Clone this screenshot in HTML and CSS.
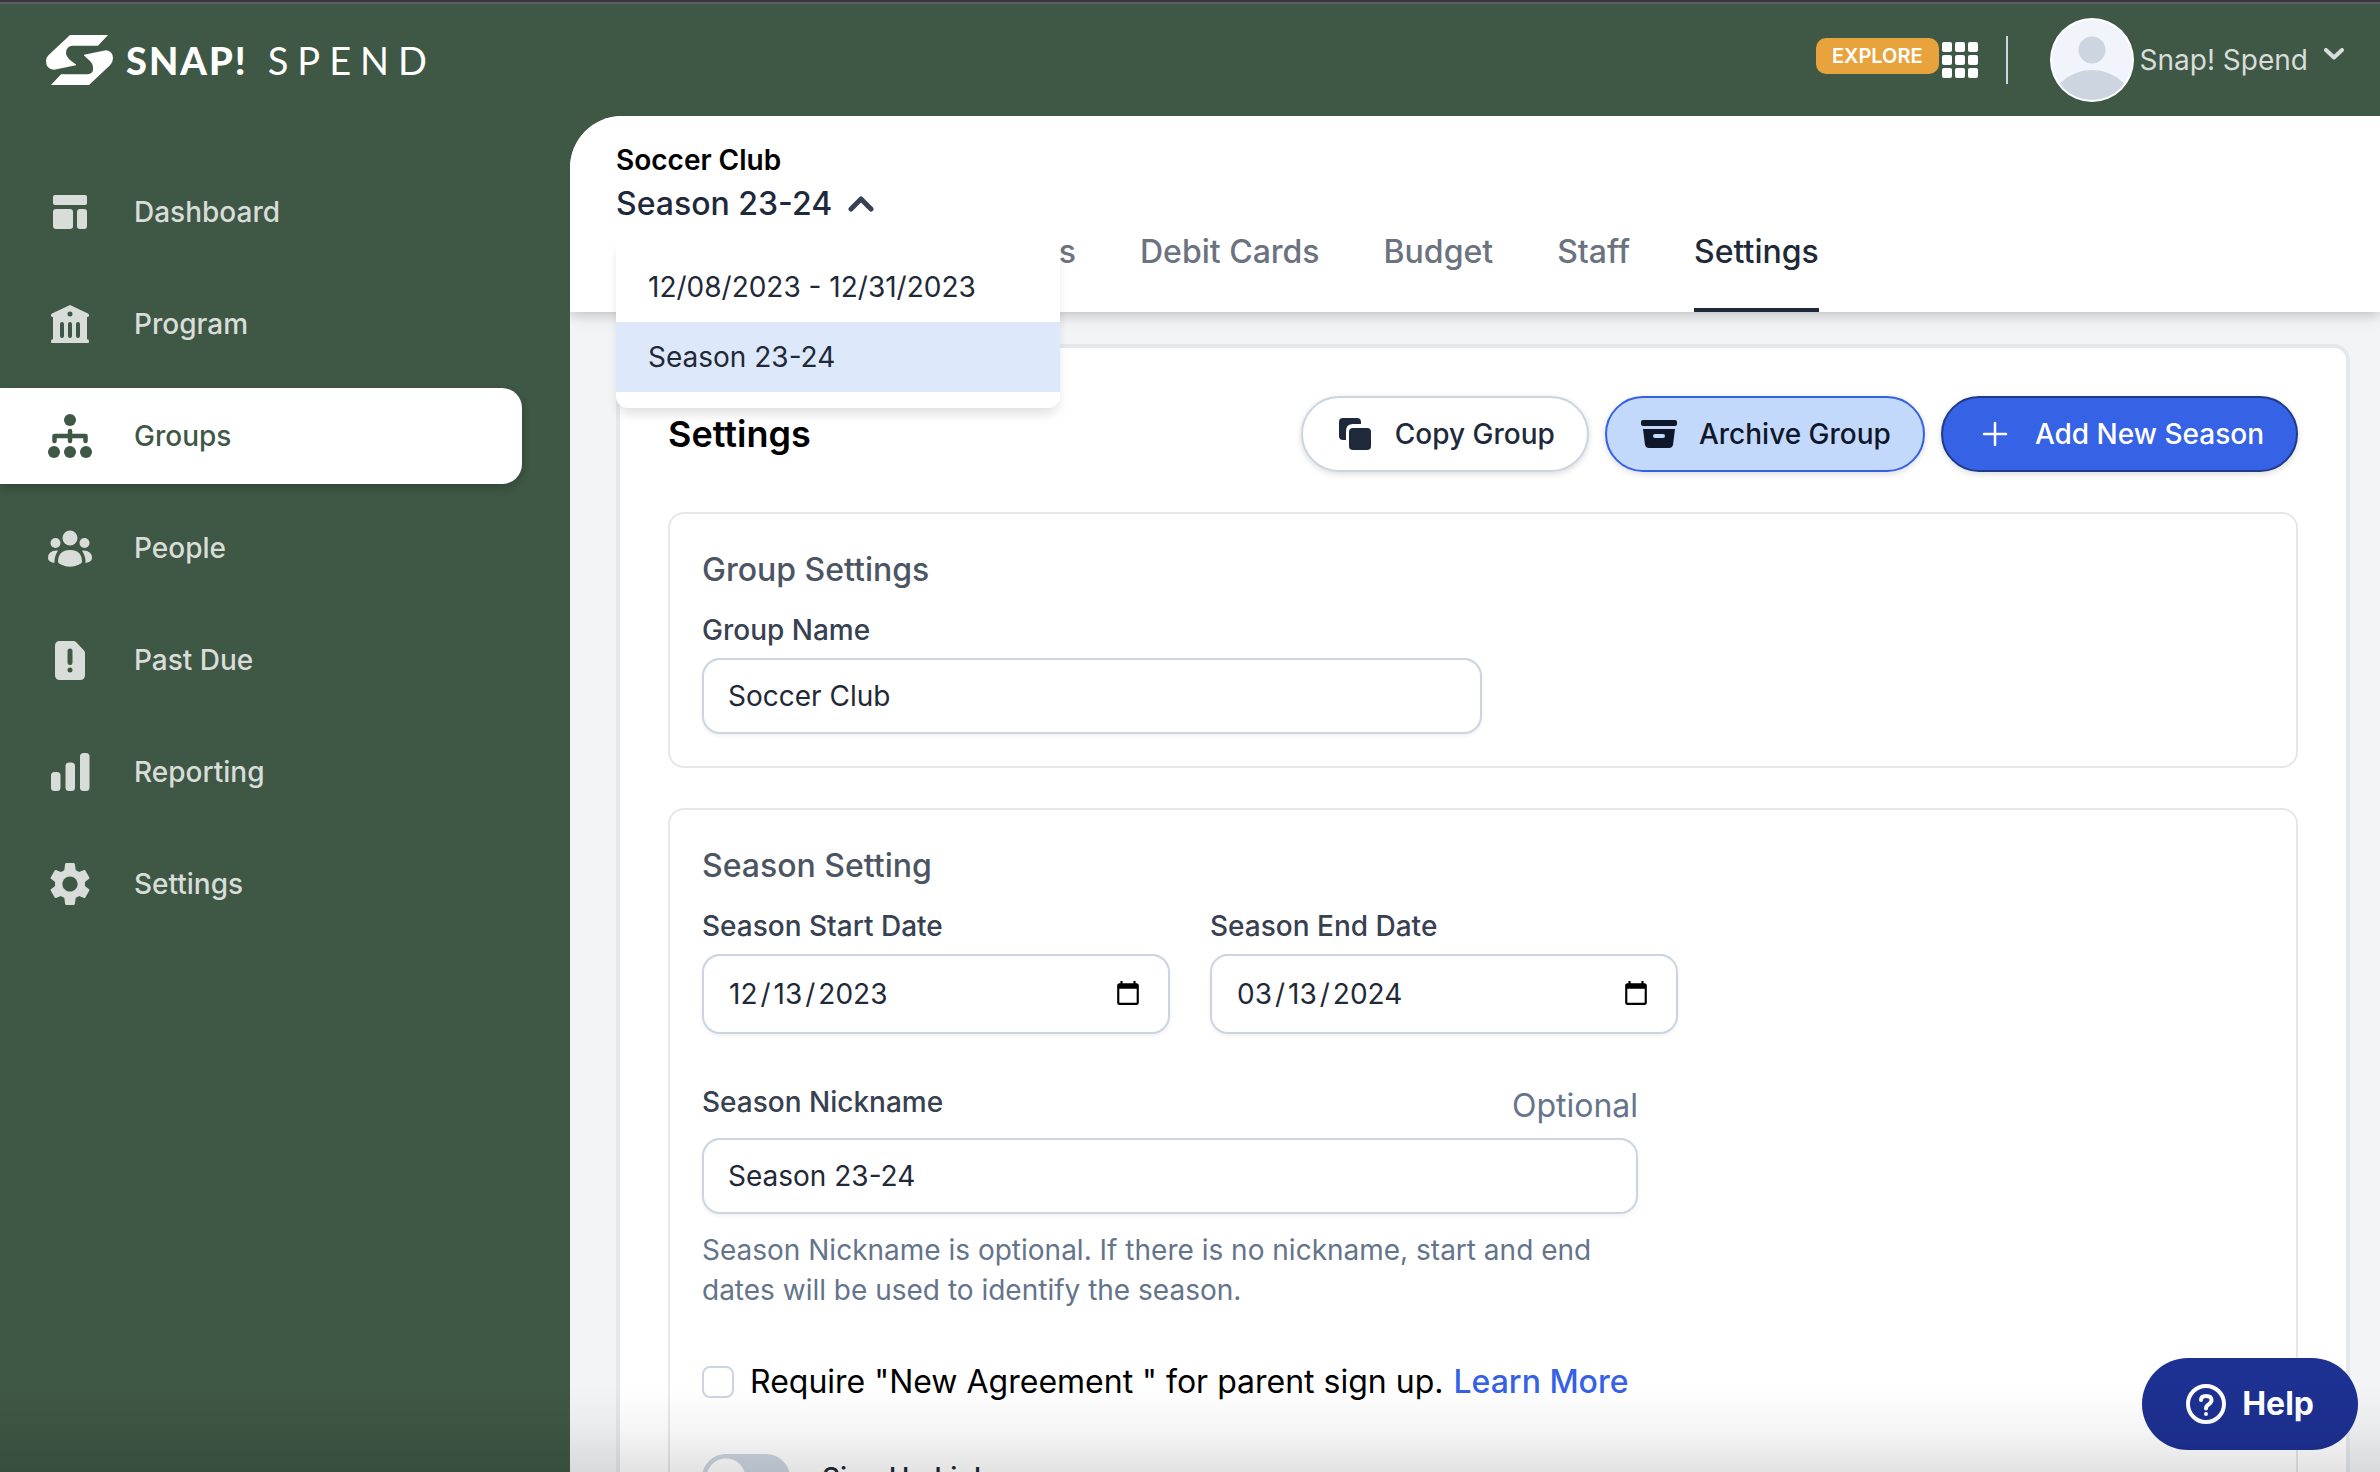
FILE: index.html
```html
<!DOCTYPE html>
<html lang="en">
<head>
<meta charset="utf-8">
<title>Snap! Spend – Group Settings</title>
<link rel="stylesheet" href="styles.css">
</head>
<body>
<div class="app">
  <header class="topbar">
    <a class="brand" href="#">
      <svg class="brand-mark" viewBox="0 0 68 56" preserveAspectRatio="none" aria-hidden="true">
        <path d="M24 0H62L52 12H26Q20 13 20 20Q20 24 24 28L30 33V34L8 39Q0 38 0 29Q0 25 4 21Z"/>
        <path d="M43 56H5L15 44H42Q48 43 47 36Q47 32 44 29L38 23V22L60 17Q67 18 67 26Q67 30 64 34Z"/>
      </svg>
      <span class="brand-name">SNAP!</span>
      <span class="brand-product">SPEND</span>
    </a>
    <div class="account">
      <button class="explore" type="button">EXPLORE</button>
      <button class="apps" type="button" aria-label="Apps">
        <svg viewBox="0 0 36 36" width="36" height="36">
          <rect x="0" y="0" width="10" height="10" rx="2"/><rect x="13" y="0" width="10" height="10" rx="2"/><rect x="26" y="0" width="10" height="10" rx="2"/>
          <rect x="0" y="13" width="10" height="10" rx="2"/><rect x="13" y="13" width="10" height="10" rx="2"/><rect x="26" y="13" width="10" height="10" rx="2"/>
          <rect x="0" y="26" width="10" height="10" rx="2"/><rect x="13" y="26" width="10" height="10" rx="2"/><rect x="26" y="26" width="10" height="10" rx="2"/>
        </svg>
      </button>
      <span class="divider"></span>
      <button class="user" type="button">
        <svg class="avatar" viewBox="0 0 84 84" aria-hidden="true">
          <clipPath id="face"><circle cx="42" cy="42" r="40"/></clipPath>
          <circle cx="42" cy="42" r="42" fill="#fff"/>
          <g clip-path="url(#face)">
            <rect width="84" height="84" fill="#f1f5fb"/>
            <circle cx="42" cy="32" r="13.500" fill="#cdd5e1"/>
            <circle cx="42" cy="97" r="45" fill="#cdd5e1"/>
          </g>
        </svg>
        <span>Snap! Spend</span>
        <svg class="user-caret" viewBox="0 0 20 12" aria-hidden="true"><path d="M2 2L10 9.500L18 2"/></svg>
      </button>
    </div>
  </header>

  <nav class="sidebar" aria-label="Main">
    <a class="nav-link" href="#">
      <svg viewBox="0 0 48 48"><rect x="7" y="7" width="34" height="10" rx="2"/><rect x="7" y="21" width="20" height="20" rx="3"/><rect x="31" y="21" width="10" height="20" rx="3"/></svg>
      Dashboard</a>
    <a class="nav-link" href="#">
      <svg viewBox="0 0 48 48"><path fill-rule="evenodd" d="M24 5L42 13.500Q43 14 43 15V16Q43 17 41 17V39Q43 39.500 43 41V42Q43 43 42 43H6Q5 43 5 42V41Q5 39.500 7 39V17Q5 17 5 16V15Q5 14 6 13.500ZM24 11.500a2.500 2.500 0 1 0 0 5a2.500 2.500 0 1 0 0-5ZM14 24V36a2 2 0 0 0 4 0V24a2 2 0 0 0-4 0ZM22 24V36a2 2 0 0 0 4 0V24a2 2 0 0 0-4 0ZM30 24V36a2 2 0 0 0 4 0V24a2 2 0 0 0-4 0Z"/></svg>
      Program</a>
    <a class="nav-link active" href="#" aria-current="page">
      <svg viewBox="0 0 48 48"><circle cx="24" cy="8" r="6"/><circle cx="8" cy="40" r="6"/><circle cx="24" cy="40" r="6"/><circle cx="40" cy="40" r="6"/><path d="M8.500 29V24H39.500V29M24 19V29" fill="none" stroke="currentColor" stroke-width="4.500" stroke-linecap="round" stroke-linejoin="round"/></svg>
      Groups</a>
    <a class="nav-link" href="#">
      <svg viewBox="0 0 48 48"><circle cx="24" cy="14" r="7.500"/><circle cx="9.500" cy="19" r="5"/><circle cx="38.500" cy="19" r="5"/><path d="M12 38Q12 26 24 26Q36 26 36 38Q36 39 33 40.500Q24 45 15 40.500Q12 39 12 38Z"/><path d="M12 26.500Q8 33 8.500 39Q2 38 2 34Q2 26 12 26.500ZM36 26.500Q40 33 39.500 39Q46 38 46 34Q46 26 36 26.500Z"/></svg>
      People</a>
    <a class="nav-link" href="#">
      <svg viewBox="0 0 48 48"><path fill-rule="evenodd" d="M14 5H27Q29 5 30 6L38 14.500Q39 15.500 39 17V39Q39 44 34 44H14Q9 44 9 39V10Q9 5 14 5ZM21.500 15V26.500a2.500 2.500 0 0 0 5 0V15a2.500 2.500 0 0 0-5 0ZM24 31.500a2.500 2.500 0 1 0 0 5a2.500 2.500 0 1 0 0-5Z"/></svg>
      Past Due</a>
    <a class="nav-link" href="#">
      <svg viewBox="0 0 48 48"><rect x="5" y="24" width="9.500" height="19" rx="3.500"/><rect x="19.500" y="14.500" width="9.500" height="28.500" rx="3.500"/><rect x="34" y="5" width="9.500" height="38" rx="3.500"/></svg>
      Reporting</a>
    <a class="nav-link" href="#">
      <svg viewBox="0 0 24 24"><path d="M19.430 12.980c.04-.32.07-.64.07-.98s-.03-.66-.07-.98l2.110-1.650c.19-.15.24-.42.12-.64l-2-3.460c-.12-.22-.39-.3-.61-.22l-2.490 1c-.52-.4-1.080-.73-1.690-.98l-.38-2.650C14.460 2.180 14.250 1.500 14 1.500h-4c-.25 0-.46.680-.49.920l-.38 2.650c-.61.25-1.170.59-1.690.98l-2.490-1c-.23-.09-.49 0-.61.22l-2 3.460c-.13.22-.07.49.12.64l2.110 1.650c-.04.32-.07.65-.07.98s.03.66.07.98l-2.110 1.650c-.19.15-.24.42-.12.64l2 3.460c.12.22.39.3.61.22l2.490-1c.52.4 1.080.73 1.690.98l.38 2.650c.03.24.24.920.49.920h4c.25 0 .46-.680.49-.920l.38-2.650c.61-.25 1.170-.59 1.690-.98l2.490 1c.23.09.49 0 .61-.22l2-3.460c.12-.22.07-.49-.12-.64l-2.110-1.650zM12 15.800c-2.100 0-3.800-1.700-3.800-3.800s1.700-3.800 3.800-3.800 3.800 1.700 3.800 3.800-1.700 3.800-3.800 3.800z"/></svg>
      Settings</a>
  </nav>

  <div class="page">
    <div class="page-head">
      <p class="group-name">Soccer Club</p>
      <div class="season-picker">
        <button class="season-toggle" type="button" aria-expanded="true">
          Season 23-24
          <svg viewBox="0 0 26 16" width="26" height="16" aria-hidden="true"><path d="M3 13L13 3L23 13"/></svg>
        </button>
        <ul class="season-menu">
          <li><button type="button">12/08/2023 - 12/31/2023</button></li>
          <li><button class="selected" type="button">Season 23-24</button></li>
        </ul>
      </div>
      <nav class="tabs" aria-label="Group">
        <a class="tab tab-covered" href="#">Transactions</a>
        <a class="tab" href="#">Debit Cards</a>
        <a class="tab" href="#">Budget</a>
        <a class="tab" href="#">Staff</a>
        <a class="tab current" href="#" aria-current="page">Settings</a>
      </nav>
    </div>

    <main class="content">
      <div class="card">
        <div class="card-head">
          <h1>Settings</h1>
          <div class="actions">
            <button class="btn btn-plain" type="button">
              <svg viewBox="0 0 40 40" width="40" height="40" aria-hidden="true"><path d="M8 4H22Q26 4 26 8V10H18Q11 10 11 17V26H8Q4 26 4 22V8Q4 4 8 4Z"/><rect x="14" y="14" width="22" height="22" rx="4"/></svg>
              Copy Group</button>
            <button class="btn btn-soft" type="button">
              <svg viewBox="0 0 40 40" width="40" height="40" aria-hidden="true"><rect x="2" y="6" width="36" height="6" rx="2"/><path fill-rule="evenodd" d="M4 15H36L34 31Q33 34 30 34H10Q7 34 6 31ZM16 20Q14 20 14 22T16 24H24Q26 24 26 22T24 20Z"/></svg>
              Archive Group</button>
            <button class="btn btn-primary" type="button">
              <svg viewBox="0 0 40 40" width="40" height="40" aria-hidden="true"><path d="M20 9V31M9 20H31" stroke="#fff" stroke-width="2.500" stroke-linecap="round"/></svg>
              Add New Season</button>
          </div>
        </div>

        <section class="panel">
          <h2>Group Settings</h2>
          <div class="field field-group">
            <label for="group">Group Name</label>
            <input id="group" type="text" value="Soccer Club">
          </div>
        </section>

        <section class="panel">
          <h2>Season Setting</h2>
          <div class="dates">
            <div class="field">
              <label for="start">Season Start Date</label>
              <input id="start" type="date" value="2023-12-13">
            </div>
            <div class="field">
              <label for="end">Season End Date</label>
              <input id="end" type="date" value="2024-03-13">
            </div>
          </div>
          <div class="field field-nickname">
            <div class="label-row">
              <label for="nickname">Season Nickname</label>
              <span class="optional">Optional</span>
            </div>
            <input id="nickname" type="text" value="Season 23-24">
            <p class="hint">Season Nickname is optional. If there is no nickname, start and end dates will be used to identify the season.</p>
          </div>
          <div class="check-row">
            <input id="agreement" type="checkbox">
            <label for="agreement">Require "New Agreement " for parent sign up.</label>
            <a href="#">Learn More</a>
          </div>
          <div class="switch-row">
            <input id="signup" type="checkbox" role="switch">
            <label for="signup">Sign Up Link</label>
          </div>
        </section>
      </div>
    </main>
  </div>
</div>
<button class="help" type="button">
  <svg viewBox="0 0 40 40" width="40" height="40" aria-hidden="true"><circle cx="20" cy="20" r="18"/><path d="M15 16Q15 12 20 12Q25.500 12 25.500 16Q25.500 18.500 22.500 20.500Q20 22 20 24.500"/><circle class="dot" cx="20" cy="30" r="2"/></svg>
  Help</button>
<div class="fade"></div>
</body>
</html>
```
FILE: styles.css
```css
* { box-sizing: border-box; }

body {
  margin: 0;
  height: 100vh;
  overflow: hidden;
  background: #3f5745;
  color: #1f2937;
  font-family: Inter, "Liberation Sans", sans-serif;
  font-optical-sizing: none;
  font-size: 28px;
  line-height: 40px;
}

button, input { font: inherit; font-optical-sizing: inherit; color: inherit; }
button { margin: 0; padding: 0; border: 0; background: none; }
a { color: inherit; text-decoration: none; }
h1, h2, p, ul { margin: 0; padding: 0; font-weight: inherit; }
ul { list-style: none; }
svg { flex: none; display: block; }

.app {
  display: grid;
  grid-template: 116px 1fr / 570px 1fr;
  height: 100vh;
}

/* Top bar */
.topbar {
  grid-column: 1 / -1;
  display: flex;
  align-items: center;
  justify-content: space-between;
  padding: 2px 36px 0 46px;
  border-top: 2px solid #37353b;
  box-shadow: inset 0 2px #5f5c63;
  color: #fff;
}
.brand {
  display: flex;
  align-items: center;
  font-family: Lato, sans-serif;
  font-size: 38px;
}
.brand-mark { width: 68px; height: 50px; fill: #fff; }
.brand-name { margin-left: 12px; font-weight: 900; letter-spacing: 2px; }
.brand-product { margin-left: 20px; letter-spacing: 9px; }

.account { display: flex; align-items: center; }
.explore {
  height: 36px;
  padding: 0 16px;
  margin-bottom: 8px;
  border-radius: 10px;
  background: #e8a33d;
  font-size: 20px;
  font-weight: 600;
  line-height: 36px;
}
.apps { margin-left: 3px; fill: #fff; }
.divider { width: 2px; height: 48px; margin: 0 42px 0 28px; background: #cbd5e1; }
.user { display: flex; align-items: center; color: #d9ddda; }
.avatar { width: 84px; height: 84px; margin-right: 6px; }
.user-caret {
  width: 20px;
  height: 12px;
  margin: 0 0 12px 16px;
  fill: none;
  stroke: currentColor;
  stroke-width: 4;
  stroke-linecap: round;
  stroke-linejoin: round;
}

/* Sidebar */
.sidebar {
  display: flex;
  flex-direction: column;
  gap: 16px;
  padding: 48px 48px 0 0;
}
.nav-link {
  display: flex;
  align-items: center;
  gap: 40px;
  height: 96px;
  padding-left: 46px;
  border-radius: 0 20px 20px 0;
  color: #d9ddda;
  font-weight: 500;
}
.nav-link svg { width: 48px; height: 48px; fill: currentColor; }
.nav-link.active {
  background: #fff;
  color: #3f5745;
  box-shadow: 0 4px 10px rgba(0, 0, 0, .2);
}

/* Page */
.page {
  display: flex;
  flex-direction: column;
  min-width: 0;
  min-height: 0;
  overflow: hidden;
  border-top-left-radius: 52px;
  background: #f3f4f6;
}
.page-head {
  position: relative;
  z-index: 1;
  display: flex;
  flex-direction: column;
  flex: none;
  height: 196px;
  padding: 24px 46px 0;
  background: #fff;
  box-shadow: 0 2px 14px rgba(0, 0, 0, .25);
}
.group-name { color: #000; font-weight: 600; }
.season-picker { position: relative; align-self: flex-start; }
.season-toggle {
  display: flex;
  align-items: center;
  gap: 16px;
  height: 48px;
  color: #1e293b;
  font-size: 32px;
  font-weight: 500;
}
.season-toggle svg {
  fill: none;
  stroke: #374151;
  stroke-width: 5;
  stroke-linecap: round;
  stroke-linejoin: round;
}
.season-menu {
  position: absolute;
  top: 56px;
  left: 0;
  z-index: 2;
  width: 444px;
  padding: 16px 0;
  border-radius: 12px;
  background: #fff;
  box-shadow: 0 8px 12px -2px rgba(0, 0, 0, .12);
}
.season-menu button {
  width: 100%;
  height: 70px;
  padding: 0 32px;
  text-align: left;
}
.season-menu .selected { background: #dde8fb; }

.tabs { display: flex; gap: 64px; flex: 1; }
.tab {
  padding-top: 4px;
  border-bottom: 4px solid transparent;
  color: #6b7280;
  font-size: 32px;
  font-weight: 500;
}
.tab-covered { width: 460px; text-align: right; }
.tab.current { border-color: #1f2937; color: #1f2937; }

.content { padding: 32px 30px 0 46px; }
.card {
  padding: 48px;
  border: 4px solid #e5e7eb;
  border-radius: 16px;
  background: #fff;
}
.card-head {
  display: flex;
  align-items: center;
  justify-content: space-between;
  margin-bottom: 40px;
}
h1 { color: #000; font-size: 36px; font-weight: 600; }
.actions { display: flex; gap: 16px; }
.btn {
  display: flex;
  align-items: center;
  gap: 20px;
  height: 76px;
  padding: 0 32px;
  border: 2px solid;
  border-radius: 38px;
  font-weight: 500;
  box-shadow: 0 2px 6px rgba(0, 0, 0, .15);
}
.btn svg { fill: currentColor; }
.btn-plain { border-color: #cbd5e1; background: #fff; color: #1e293b; }
.btn-soft { border-color: #3461e5; background: #c3d9fb; color: #0f172a; }
.btn-primary { border-color: #1e3a8a; background: #3662e6; color: #fff; }

.panel {
  margin-bottom: 40px;
  padding: 32px;
  border: 2px solid #e5e7eb;
  border-radius: 16px;
}
h2 {
  margin-bottom: 20px;
  color: #4b5563;
  font-size: 32px;
  font-weight: 500;
  line-height: 48px;
}
.field { display: flex; flex-direction: column; }
.field label { color: #374151; font-weight: 500; line-height: 32px; }
.field input {
  width: 100%;
  height: 76px;
  margin-top: 12px;
  padding: 0 24px;
  border: 2px solid #cbd5e1;
  border-radius: 18px;
  background: #fff;
  box-shadow: 0 2px 4px rgba(0, 0, 0, .06);
}
.field input[type="date"] { height: 80px; }
::-webkit-datetime-edit-text { padding: 0 2px; }
.field-group { max-width: 780px; }
.dates {
  display: grid;
  grid-template-columns: 468px 468px;
  gap: 40px;
}
.field-nickname { max-width: 936px; margin-top: 48px; }
.label-row { display: flex; justify-content: space-between; align-items: flex-start; }
.label-row label { line-height: 40px; }
.optional { color: #64748b; font-size: 32px; line-height: 48px; }
.field-nickname input { margin-top: 8px; }
.hint { margin-top: 16px; color: #64748b; }

.check-row {
  display: flex;
  align-items: center;
  margin-top: 52px;
  color: #000;
  font-size: 32px;
}
.check-row input {
  appearance: none;
  width: 32px;
  height: 32px;
  margin: 0 16px 0 0;
  border: 2px solid #cbd5e1;
  border-radius: 8px;
}
.check-row a { margin-left: 10px; color: #3461e5; font-weight: 500; }
.switch-row {
  display: flex;
  align-items: center;
  gap: 32px;
  margin-top: 52px;
}
.switch-row input {
  appearance: none;
  width: 88px;
  height: 48px;
  margin: 0;
  border-radius: 24px;
  background: radial-gradient(circle at 24px 24px, #fff 19px, #cbd5e1 20px);
}
.switch-row label { font-weight: 500; }

/* Floating help button and bottom fade */
.help {
  position: fixed;
  right: 22px;
  bottom: 22px;
  z-index: 3;
  display: flex;
  align-items: center;
  gap: 16px;
  height: 92px;
  padding: 0 44px;
  border-radius: 46px;
  background: #1d3192;
  color: #fff;
  font-size: 32px;
  font-weight: 700;
}
.help svg { fill: none; stroke: #fff; stroke-width: 4; stroke-linecap: round; }
.help .dot { fill: #fff; stroke: none; }
.fade {
  position: fixed;
  inset: auto 0 0;
  z-index: 4;
  height: 84px;
  background: linear-gradient(rgba(0, 0, 0, 0), rgba(0, 0, 0, .04) 50%, rgba(0, 0, 0, .11));
  pointer-events: none;
}
```
